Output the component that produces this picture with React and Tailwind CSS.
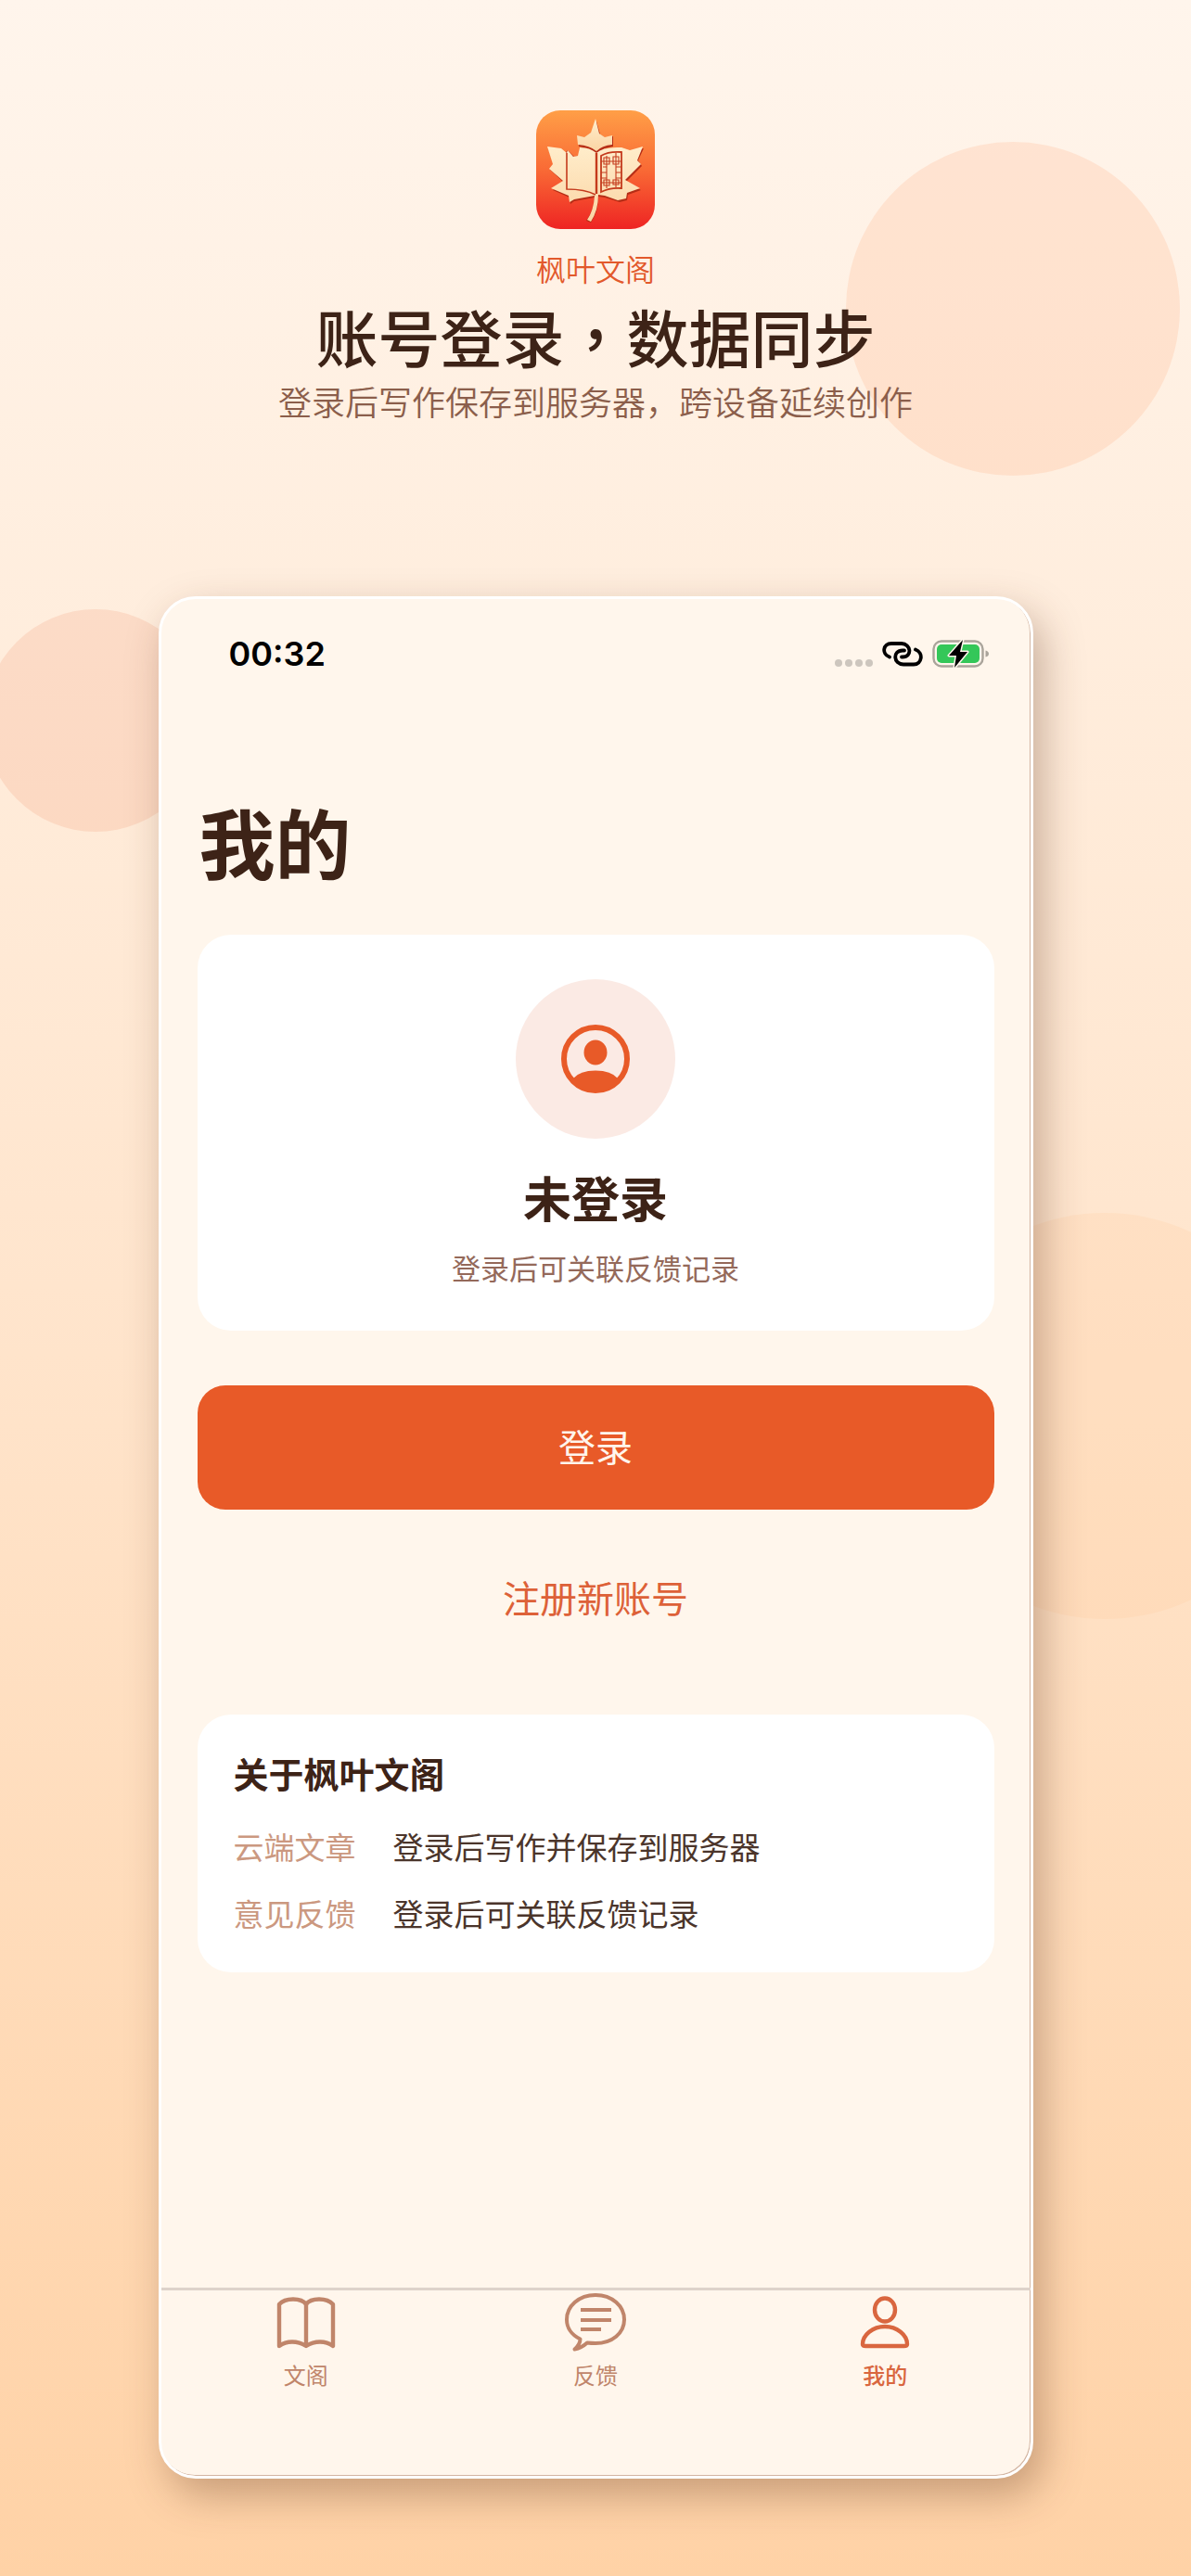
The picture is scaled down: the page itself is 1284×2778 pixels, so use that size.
import { clsx } from "clsx";

const ABOUT_ROWS = [
  { label: "云端文章", value: "登录后写作并保存到服务器" },
  { label: "意见反馈", value: "登录后可关联反馈记录" },
];

const TABS = [
  { label: "文阁", icon: BookIcon },
  { label: "反馈", icon: ChatIcon },
  { label: "我的", icon: PersonIcon, active: true },
];

function AppLogo() {
  return (
    <svg viewBox="0 0 128 128" className="size-32" aria-hidden="true">
      <defs>
        <linearGradient id="logoBg" x1="0" y1="0" x2="0" y2="1">
          <stop offset="0" stopColor="#ff9f47" />
          <stop offset="0.5" stopColor="#f96a35" />
          <stop offset="1" stopColor="#ee2423" />
        </linearGradient>
        <linearGradient id="leaf" x1="0" y1="0" x2="0" y2="1">
          <stop offset="0" stopColor="#ffedcb" />
          <stop offset="1" stopColor="#fbd5a4" />
        </linearGradient>
      </defs>
      <rect width="128" height="128" rx="26" fill="url(#logoBg)" />
      <path d="M65 12 69 26 75 30 83 28 83 39 74 41 65 46 56 41 46 39 45 28 53 30 59 25Z" fill="#b52d16" />
      <path
        d="M13 41 27 43 31 46 34 43 41 50 46 49 47 40Q58 40 65 46Q72 39 94 42L101 45 116 41 110 54 114 60 97 77 113 86 99 91 98 97 90 99 74 94 67 93Q67 110 59 121L54 119Q62 108 63 94L41 98 37 101 36 94 18 86 30 78 15 64 19 59Z"
        fill="#b52d16"
      />
      <path d="M64 9 68 25 74 29 82 27 82 37Q71 38 65 44Q58 38 45 37L44 27 52 29 59 24Z" fill="url(#leaf)" />
      <path
        d="M12 39 27 41 33 46 34 43 40 50 45 49 47 40Q58 40 65 46Q72 39 92 40L101 43 115 39 109 54 113 58 96 75 112 84 98 89 97 95 88 97 74 92 67 91Q67 108 59 120L55 118Q62 108 63 92L41 96 36 99 35 92 16 84 29 76 14 63 18 58Z"
        fill="url(#leaf)"
      />
      <path d="M33 46V85Q53 85 64 91" fill="none" stroke="#c43a1c" strokeWidth="1.6" />
      <path d="M65 46V90" stroke="#c43a1c" strokeWidth="2.4" />
      <path d="M70 49Q78 44 92 45V84Q80 83 70 88Z" fill="none" stroke="#c43a1c" strokeWidth="1.8" />
      <path
        d="M76 55H86V78H76ZM76 55V49M86 55V46M76 78V84M86 78V83M70 55H76M86 55H92M70 78H76M86 78H92M72 61H76M86 61H92M70 67H76M86 67H92M70 73H76M86 73H92M73 51H79V58H73ZM83 50H89V58H83ZM73 75H79V81H73ZM83 75H89V80H83Z"
        fill="none"
        stroke="#c43a1c"
        strokeWidth="1.1"
      />
    </svg>
  );
}

function LinkIcon() {
  return (
    <svg viewBox="0 0 44 28" className="h-7 w-11" fill="none" stroke="#000" strokeWidth="3.8" strokeLinecap="round" aria-hidden="true">
      <path d="M8 17.5C-1 14 1 3 10 3H21C31 3 33 17.5 22 17.5H21" />
      <path d="M36 9.5C45 13 43 25.5 34 25.5H23C12 25.5 11 10.5 22 10.5H24" />
    </svg>
  );
}

function BatteryIcon() {
  return (
    <svg viewBox="0 0 62 32" className="h-8 w-[62px]" aria-hidden="true">
      <rect x="1.5" y="2.5" width="53" height="27" rx="8.5" fill="none" stroke="#aaa49b" strokeWidth="2.4" />
      <rect x="5" y="6" width="46" height="20" rx="5" fill="#34c759" />
      <path d="M57.5 12.5Q61 13.5 61 16T57.5 19.5Z" fill="#aaa49b" />
      <path
        d="M33 1 18 18H26L24 31 38 14H30Z"
        fill="#000"
        stroke="#fff6ec"
        strokeWidth="3"
        paintOrder="stroke"
        strokeLinejoin="round"
      />
    </svg>
  );
}

function AccountIcon() {
  return (
    <svg viewBox="0 0 74 74" className="size-[74px]" aria-hidden="true">
      <circle cx="37" cy="37" r="34" fill="none" stroke="#e85a28" strokeWidth="6" />
      <ellipse cx="37" cy="30" rx="12.5" ry="13.5" fill="#e85a28" />
      <path d="M13 58Q20 49.5 37 49.5T61 58Q51 72 37 72T13 58Z" fill="#e85a28" />
    </svg>
  );
}

function BookIcon() {
  return (
    <svg viewBox="0 0 68 68" className="size-[68px]" fill="none" stroke="currentColor" strokeWidth="4.4" strokeLinejoin="round" aria-hidden="true">
      <path d="M34 15Q30 9.500 20 9.500T5 15V60Q11 55.500 19 55.500T34 60Q41 55.500 49 55.500T63 60V15Q58 9.500 48 9.500T34 15Z" />
      <path d="M34 15V60" />
    </svg>
  );
}

function ChatIcon() {
  return (
    <svg viewBox="0 0 68 68" className="size-[68px]" fill="none" stroke="currentColor" strokeWidth="4" strokeLinejoin="round" aria-hidden="true">
      <path d="M34 5C52 5 65 17 65 31.500S52 57 34 57Q29 57 25 56.500Q19 62 11.500 63.500Q17.500 58 17.500 52.500C8 48 3 40 3 31.500C3 17 16 5 34 5Z" />
      <path d="M18 21H51M18 32H51M18 42H40" />
    </svg>
  );
}

function PersonIcon() {
  return (
    <svg viewBox="0 0 68 68" className="size-[68px]" fill="none" stroke="currentColor" strokeWidth="4.4" strokeLinejoin="round" aria-hidden="true">
      <ellipse cx="34" cy="21" rx="11" ry="12.500" />
      <path d="M10 58C10 48 21 39 34 39S58 48 58 58Q58 60 54.500 60H13.500Q10 60 10 58Z" />
    </svg>
  );
}

function StatusBar() {
  return (
    <div className="flex h-[60px] items-center justify-between pr-11 pl-[73px]">
      <span className="font-[Inter] text-4xl leading-none font-semibold text-black">00:32</span>
      <div className="flex items-center gap-2.5">
        <div className="flex gap-[3px] pt-5">
          {[0, 1, 2, 3].map((i) => (
            <span key={i} className="size-2 rounded-full bg-[#cdc6be]" />
          ))}
        </div>
        <LinkIcon />
        <BatteryIcon />
      </div>
    </div>
  );
}

function Phone() {
  return (
    <section className="mx-auto flex min-h-[2030px] w-[74%] max-w-[943px] flex-col rounded-[40px] border-[3px] border-white bg-[#fff6ec] shadow-[inset_-1px_-1px_0_#d3b5a2,10px_18px_44px_rgb(90_50_25/0.34)]">
      <div className="pt-[29px]">
        <StatusBar />
      </div>

      <main className="flex-1 px-[39px] pt-28">
        <h2 className="pl-0.5 text-[82px] leading-[120px] font-bold text-[#3d2317]">我的</h2>

        <div className="mt-[41px] flex flex-col items-center rounded-[36px] bg-white pt-12 pb-[46px]">
          <div className="flex size-[172px] items-center justify-center rounded-full bg-[#fbeae4]">
            <AccountIcon />
          </div>
          <h3 className="mt-[31px] text-[52px] leading-[64px] font-bold text-[#3d2317]">未登录</h3>
          <p className="mt-[22px] text-[31px] leading-[44px] text-[#94695a]">登录后可关联反馈记录</p>
        </div>

        <button type="button" className="mt-[59px] h-[134px] w-full rounded-[30px] bg-[#e85a28] pb-1 text-[40px] text-[#fff5ec]">
          登录
        </button>
        <button type="button" className="mt-[46px] h-[100px] w-full pb-1 text-[40px] text-[#dd6138]">
          注册新账号
        </button>

        <div className="mt-[75px] rounded-[36px] bg-white px-[39px] pt-[35px] pb-[28px]">
          <h3 className="text-[38px] leading-[56px] font-bold text-[#3d2317]">关于枫叶文阁</h3>
          <dl className="mt-[15px] text-[33px] leading-[72px]">
            {ABOUT_ROWS.map((row) => (
              <div key={row.label} className="flex gap-10">
                <dt className="text-[#cb9880]">{row.label}</dt>
                <dd className="text-[#4b352b]">{row.value}</dd>
              </div>
            ))}
          </dl>
        </div>
      </main>

      <nav className="grid h-[203px] grid-cols-3 border-t-[3px] border-[#ddd2ca]">
        {TABS.map(({ label, icon: Icon, active }) => (
          <a
            key={label}
            href="#"
            className={clsx("flex flex-col items-center", active ? "font-medium text-[#d9663f]" : "text-[#c0856a]")}
          >
            <Icon />
            <span className="mt-[7px] text-2xl leading-8">{label}</span>
          </a>
        ))}
      </nav>
    </section>
  );
}

export default function App() {
  return (
    <div className="relative min-h-screen overflow-hidden bg-linear-to-b from-[#fff5ec] via-[#ffe5cd] to-[#ffd2a6] pt-[119px] pb-[105px] font-['Noto_Sans_CJK_SC',sans-serif]">
      <div className="absolute top-[153px] right-3 size-[360px] rounded-full bg-[#ff8c50]/15" />
      <div className="absolute top-[657px] -left-[17px] size-[240px] rounded-full bg-[#e85a28]/12" />
      <div className="absolute top-[1308px] -right-[126px] size-[438px] rounded-full bg-[#ffc896]/20" />

      <header className="relative flex flex-col items-center text-center">
        <AppLogo />
        <p className="mt-[18px] text-[32px] leading-[48px] font-[350] text-[#e2592b]">枫叶文阁</p>
        <h1 className="mt-[9px] text-[67px] leading-[80px] font-medium text-[#3d2317]">
          账号登录<span className="font-['Noto_Sans_CJK_TC',sans-serif]">，</span>数据同步
        </h1>
        <p className="mt-[5px] text-4xl leading-[50px] font-[350] text-[#8b5e4b]">登录后写作保存到服务器，跨设备延续创作</p>
      </header>

      <div className="relative mt-[186px]">
        <Phone />
      </div>
    </div>
  );
}
